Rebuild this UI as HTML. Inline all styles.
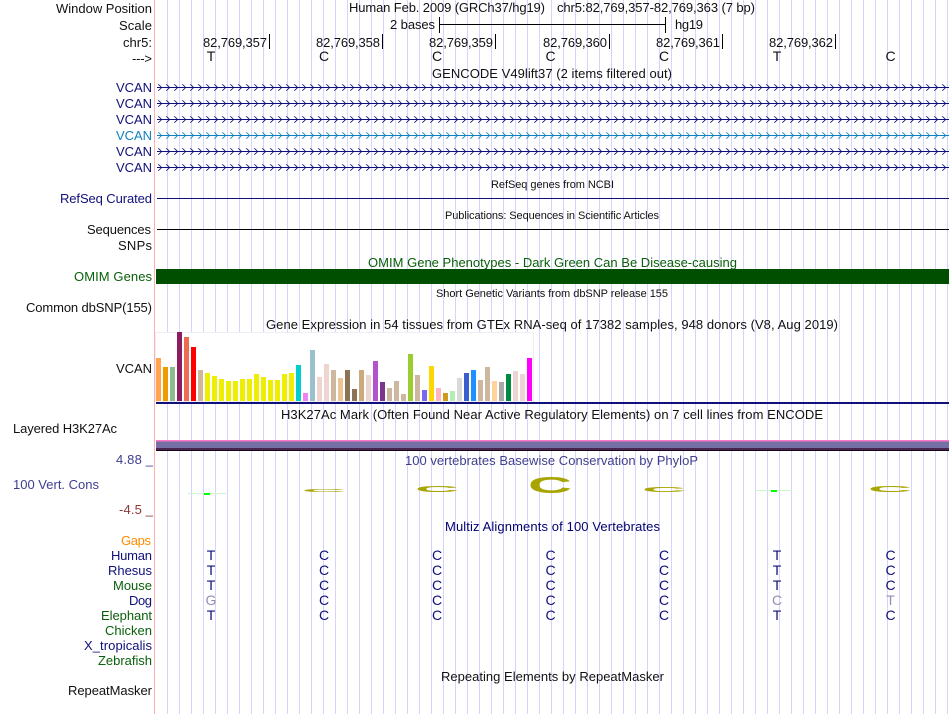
<!DOCTYPE html>
<html><head><meta charset="utf-8"><title>Genome Browser</title>
<style>
html,body{margin:0;padding:0;background:#fff;width:950px;height:714px;overflow:hidden}
svg{display:block}
text{font-family:"Liberation Sans",sans-serif;font-size:13px;fill:#111}
.s{font-size:11px}
.n{fill:#10107a}.g{fill:#0a600a}.p{fill:#3f3f8f}
.a{fill:#10107a;text-anchor:middle;font-size:14px}.y{fill:#9090b0;text-anchor:middle;font-size:14px}
.c{text-anchor:middle;font-size:14px}
.l{font-size:100px;font-weight:bold;fill:#a8a400}
</style></head><body>
<svg width="950" height="714" viewBox="0 0 950 714" xmlns="http://www.w3.org/2000/svg">
<defs>
<pattern id="grid" patternUnits="userSpaceOnUse" x="167" y="0" width="12" height="10"><rect x="0" y="0" width="1" height="10" fill="#d4d4ff"/></pattern>
<pattern id="chev" patternUnits="userSpaceOnUse" x="157" y="84" width="8" height="8"><path d="M1.3 .3L4.7 3.5L1.3 6.7" fill="none" stroke="#10107a" stroke-width=".85"/></pattern>
<pattern id="chevb" patternUnits="userSpaceOnUse" x="157" y="84" width="8" height="8"><path d="M1.3 .3L4.7 3.5L1.3 6.7" fill="none" stroke="#1080c0" stroke-width=".85"/></pattern>
</defs>
<rect width="950" height="714" fill="#fff"/>
<rect x="167" y="0" width="783" height="714" fill="url(#grid)"/>
<rect x="154" y="0" width="1" height="714" fill="#ffb0b0"/>

<!-- header labels -->
<text x="56" y="13" textLength="96">Window Position</text>
<text x="119" y="30" textLength="33">Scale</text>
<text x="123" y="47" textLength="29">chr5:</text>
<text x="132" y="63" textLength="20">---&gt;</text>
<text x="349" y="12" textLength="196">Human Feb. 2009 (GRCh37/hg19)</text>
<text x="557" y="12" textLength="198">chr5:82,769,357-82,769,363 (7 bp)</text>
<text x="390" y="29" textLength="45">2 bases</text>
<text x="675" y="29" textLength="28">hg19</text>
<rect x="440" y="24" width="226" height="1" fill="#000"/>
<rect x="439" y="17" width="1" height="16" fill="#000"/>
<rect x="665" y="17" width="1" height="16" fill="#000"/>

<text x="203" y="47" textLength="64">82,769,357</text><rect x="269" y="34" width="1" height="15" fill="#000"/>
<text x="316" y="47" textLength="64">82,769,358</text><rect x="382" y="34" width="1" height="15" fill="#000"/>
<text x="429" y="47" textLength="64">82,769,359</text><rect x="495" y="34" width="1" height="15" fill="#000"/>
<text x="543" y="47" textLength="64">82,769,360</text><rect x="609" y="34" width="1" height="15" fill="#000"/>
<text x="656" y="47" textLength="64">82,769,361</text><rect x="722" y="34" width="1" height="15" fill="#000"/>
<text x="769" y="47" textLength="64">82,769,362</text><rect x="835" y="34" width="1" height="15" fill="#000"/>

<text class="c" x="211" y="61">T</text><text class="c" x="324" y="61">C</text><text class="c" x="437" y="61">C</text><text class="c" x="550.5" y="61">C</text><text class="c" x="664" y="61">C</text><text class="c" x="777" y="61">T</text><text class="c" x="890.5" y="61">C</text>

<text x="432" y="78" textLength="240">GENCODE V49lift37 (2 items filtered out)</text>

<!-- VCAN genes -->
<text class="n" x="116" y="92" textLength="36">VCAN</text>
<text class="n" x="116" y="108" textLength="36">VCAN</text>
<text class="n" x="116" y="124" textLength="36">VCAN</text>
<text x="116" y="140" textLength="36" style="fill:#1080c0">VCAN</text>
<text class="n" x="116" y="156" textLength="36">VCAN</text>
<text class="n" x="116" y="172" textLength="36">VCAN</text>
<rect x="157" y="87" width="792" height="1" fill="#10107a"/>
<rect x="157" y="103" width="792" height="1" fill="#10107a"/>
<rect x="157" y="119" width="792" height="1" fill="#10107a"/>
<rect x="157" y="135" width="792" height="1" fill="#1080c0"/>
<rect x="157" y="151" width="792" height="1" fill="#10107a"/>
<rect x="157" y="167" width="792" height="1" fill="#10107a"/>
<g transform="translate(0,0)"><rect x="157" y="84" width="792" height="7" fill="url(#chev)"/></g>
<g transform="translate(0,16)"><rect x="157" y="84" width="792" height="7" fill="url(#chev)"/></g>
<g transform="translate(0,32)"><rect x="157" y="84" width="792" height="7" fill="url(#chev)"/></g>
<g transform="translate(0,48)"><rect x="157" y="84" width="792" height="7" fill="url(#chevb)"/></g>
<g transform="translate(0,64)"><rect x="157" y="84" width="792" height="7" fill="url(#chev)"/></g>
<g transform="translate(0,80)"><rect x="157" y="84" width="792" height="7" fill="url(#chev)"/></g>

<text class="s" x="491" y="188" textLength="123">RefSeq genes from NCBI</text>
<text class="n" x="60" y="203" textLength="92">RefSeq Curated</text>
<rect x="157" y="198" width="792" height="1" fill="#10107a"/>
<text class="s" x="445" y="219" textLength="214">Publications: Sequences in Scientific Articles</text>
<text x="87" y="234" textLength="64">Sequences</text>
<rect x="157" y="229" width="792" height="1" fill="#000"/>
<text x="118" y="250" textLength="34">SNPs</text>

<text class="g" x="368" y="267" textLength="369">OMIM Gene Phenotypes - Dark Green Can Be Disease-causing</text>
<text class="g" x="74" y="281" textLength="78">OMIM Genes</text>
<rect x="156" y="269" width="793" height="15" fill="#004f00"/>
<text class="s" x="436" y="297" textLength="232">Short Genetic Variants from dbSNP release 155</text>
<text x="26" y="312" textLength="126">Common dbSNP(155)</text>
<text x="266" y="329" textLength="572">Gene Expression in 54 tissues from GTEx RNA-seq of 17382 samples, 948 donors (V8, Aug 2019)</text>
<text x="116" y="373" textLength="36">VCAN</text>

<!-- GTEx bars -->
<rect x="155.5" y="332.5" width="378" height="69" fill="#fff" stroke="#eeeef4"/>
<g>
<rect x="156" y="358" width="5" height="43" fill="#FFA54F"/>
<rect x="163" y="367" width="5" height="34" fill="#EE9A00"/>
<rect x="170" y="367" width="5" height="34" fill="#8FBC8F"/>
<rect x="177" y="332" width="5" height="69" fill="#8B1C62"/>
<rect x="184" y="337" width="5" height="64" fill="#EE6A50"/>
<rect x="191" y="347" width="5" height="54" fill="#FF0000"/>
<rect x="198" y="370" width="5" height="31" fill="#CDB79E"/>
<rect x="205" y="373" width="5" height="28" fill="#EEEE00"/>
<rect x="212" y="376" width="5" height="25" fill="#EEEE00"/>
<rect x="219" y="379" width="5" height="22" fill="#EEEE00"/>
<rect x="226" y="381" width="5" height="20" fill="#EEEE00"/>
<rect x="233" y="381" width="5" height="20" fill="#EEEE00"/>
<rect x="240" y="379" width="5" height="22" fill="#EEEE00"/>
<rect x="247" y="379" width="5" height="22" fill="#EEEE00"/>
<rect x="254" y="374" width="5" height="27" fill="#EEEE00"/>
<rect x="261" y="377" width="5" height="24" fill="#EEEE00"/>
<rect x="268" y="380" width="5" height="21" fill="#EEEE00"/>
<rect x="275" y="380" width="5" height="21" fill="#EEEE00"/>
<rect x="282" y="374" width="5" height="27" fill="#EEEE00"/>
<rect x="289" y="373" width="5" height="28" fill="#EEEE00"/>
<rect x="296" y="365" width="5" height="36" fill="#00CED1"/>
<rect x="303" y="393" width="5" height="8" fill="#EE82EE"/>
<rect x="310" y="350" width="5" height="51" fill="#9AC0CD"/>
<rect x="317" y="377" width="5" height="24" fill="#EED5D2"/>
<rect x="324" y="364" width="5" height="37" fill="#EED5D2"/>
<rect x="331" y="370" width="5" height="31" fill="#CDB79E"/>
<rect x="338" y="378" width="5" height="23" fill="#EEC591"/>
<rect x="345" y="370" width="5" height="31" fill="#8B7355"/>
<rect x="352" y="389" width="5" height="12" fill="#8B7355"/>
<rect x="359" y="370" width="5" height="31" fill="#CDAA7D"/>
<rect x="366" y="375" width="5" height="26" fill="#EED5D2"/>
<rect x="373" y="361" width="5" height="40" fill="#B452CD"/>
<rect x="380" y="382" width="5" height="19" fill="#7A378B"/>
<rect x="387" y="388" width="5" height="13" fill="#CDB79E"/>
<rect x="394" y="381" width="5" height="20" fill="#CDB79E"/>
<rect x="401" y="394" width="5" height="7" fill="#CDB79E"/>
<rect x="408" y="354" width="5" height="47" fill="#9ACD32"/>
<rect x="415" y="375" width="5" height="26" fill="#CDB79E"/>
<rect x="422" y="390" width="5" height="11" fill="#7B68EE"/>
<rect x="429" y="366" width="5" height="35" fill="#FFD700"/>
<rect x="436" y="388" width="5" height="13" fill="#FFB6C1"/>
<rect x="443" y="393" width="5" height="8" fill="#CD9B1D"/>
<rect x="450" y="391" width="5" height="10" fill="#B4EEB4"/>
<rect x="457" y="378" width="5" height="23" fill="#D9D9D9"/>
<rect x="464" y="373" width="5" height="28" fill="#3A5FCD"/>
<rect x="471" y="370" width="5" height="31" fill="#1E90FF"/>
<rect x="478" y="380" width="5" height="21" fill="#CDB79E"/>
<rect x="485" y="367" width="5" height="34" fill="#CDB79E"/>
<rect x="492" y="381" width="5" height="20" fill="#FFD39B"/>
<rect x="499" y="382" width="5" height="19" fill="#A9A9A9"/>
<rect x="506" y="374" width="5" height="27" fill="#008B45"/>
<rect x="513" y="371" width="5" height="30" fill="#EED5D2"/>
<rect x="520" y="374" width="5" height="27" fill="#EED5D2"/>
<rect x="527" y="358" width="5" height="43" fill="#FF00FF"/>
</g>
<rect x="156" y="402" width="793" height="2" fill="#10107a"/>

<text x="281" y="419" textLength="542">H3K27Ac Mark (Often Found Near Active Regulatory Elements) on 7 cell lines from ENCODE</text>
<text x="13" y="433" textLength="104">Layered H3K27Ac</text>

<rect x="156" y="440" width="793" height="1.5" fill="#ff78c8"/>
<rect x="156" y="441.5" width="793" height="6.5" fill="#7570a5"/>
<rect x="156" y="448" width="793" height="2" fill="#4a2550"/>
<rect x="156" y="450" width="793" height="1" fill="#100818"/>

<text class="p" x="116" y="464" textLength="37">4.88 _</text>
<text class="p" x="13" y="489" textLength="86">100 Vert. Cons</text>
<text x="119" y="514" textLength="34" style="fill:#8b3a3a">-4.5 _</text>
<text class="p" x="405" y="465" textLength="293">100 vertebrates Basewise Conservation by PhyloP</text>

<!-- conservation logo letters -->
<text class="l" transform="translate(302,492) scale(.61,.045)">C</text>
<text class="l" transform="translate(415,492) scale(.61,.085)">C</text>
<text class="l" transform="translate(528,493) scale(.61,.235)">C</text>
<text class="l" transform="translate(642,492) scale(.61,.07)">C</text>
<text class="l" transform="translate(868,492) scale(.61,.085)">C</text>
<rect x="188" y="493" width="38" height="1" fill="#ccf5cc"/>
<rect x="204" y="493" width="6" height="2" fill="#00ff00"/>
<rect x="755" y="490" width="37" height="1" fill="#ccf5cc"/>
<rect x="771" y="490" width="6" height="2" fill="#00ff00"/>

<text x="445" y="531" textLength="215" style="fill:#000070">Multiz Alignments of 100 Vertebrates</text>

<text x="121" y="545" textLength="30" style="fill:#ff8c00">Gaps</text>
<text class="n" x="111" y="560" textLength="41">Human</text>
<text class="n" x="108" y="575" textLength="44">Rhesus</text>
<text class="g" x="113" y="590" textLength="39">Mouse</text>
<text class="n" x="129" y="605" textLength="23">Dog</text>
<text class="g" x="101" y="620" textLength="51">Elephant</text>
<text class="g" x="105" y="635" textLength="47">Chicken</text>
<text class="n" x="84" y="650" textLength="68">X_tropicalis</text>
<text class="g" x="98" y="665" textLength="54">Zebrafish</text>

<text class="a" x="211" y="560">T</text><text class="a" x="324" y="560">C</text><text class="a" x="437" y="560">C</text><text class="a" x="550.5" y="560">C</text><text class="a" x="664" y="560">C</text><text class="a" x="777" y="560">T</text><text class="a" x="890.5" y="560">C</text>
<text class="a" x="211" y="575">T</text><text class="a" x="324" y="575">C</text><text class="a" x="437" y="575">C</text><text class="a" x="550.5" y="575">C</text><text class="a" x="664" y="575">C</text><text class="a" x="777" y="575">T</text><text class="a" x="890.5" y="575">C</text>
<text class="a" x="211" y="590">T</text><text class="a" x="324" y="590">C</text><text class="a" x="437" y="590">C</text><text class="a" x="550.5" y="590">C</text><text class="a" x="664" y="590">C</text><text class="a" x="777" y="590">T</text><text class="a" x="890.5" y="590">C</text>
<text class="y" x="211" y="605">G</text><text class="a" x="324" y="605">C</text><text class="a" x="437" y="605">C</text><text class="a" x="550.5" y="605">C</text><text class="a" x="664" y="605">C</text><text class="y" x="777" y="605">C</text><text class="y" x="890.5" y="605">T</text>
<text class="a" x="211" y="620">T</text><text class="a" x="324" y="620">C</text><text class="a" x="437" y="620">C</text><text class="a" x="550.5" y="620">C</text><text class="a" x="664" y="620">C</text><text class="a" x="777" y="620">T</text><text class="a" x="890.5" y="620">C</text>

<text x="441" y="681" textLength="223">Repeating Elements by RepeatMasker</text>
<text x="68" y="695" textLength="84">RepeatMasker</text>
</svg>
</body></html>
